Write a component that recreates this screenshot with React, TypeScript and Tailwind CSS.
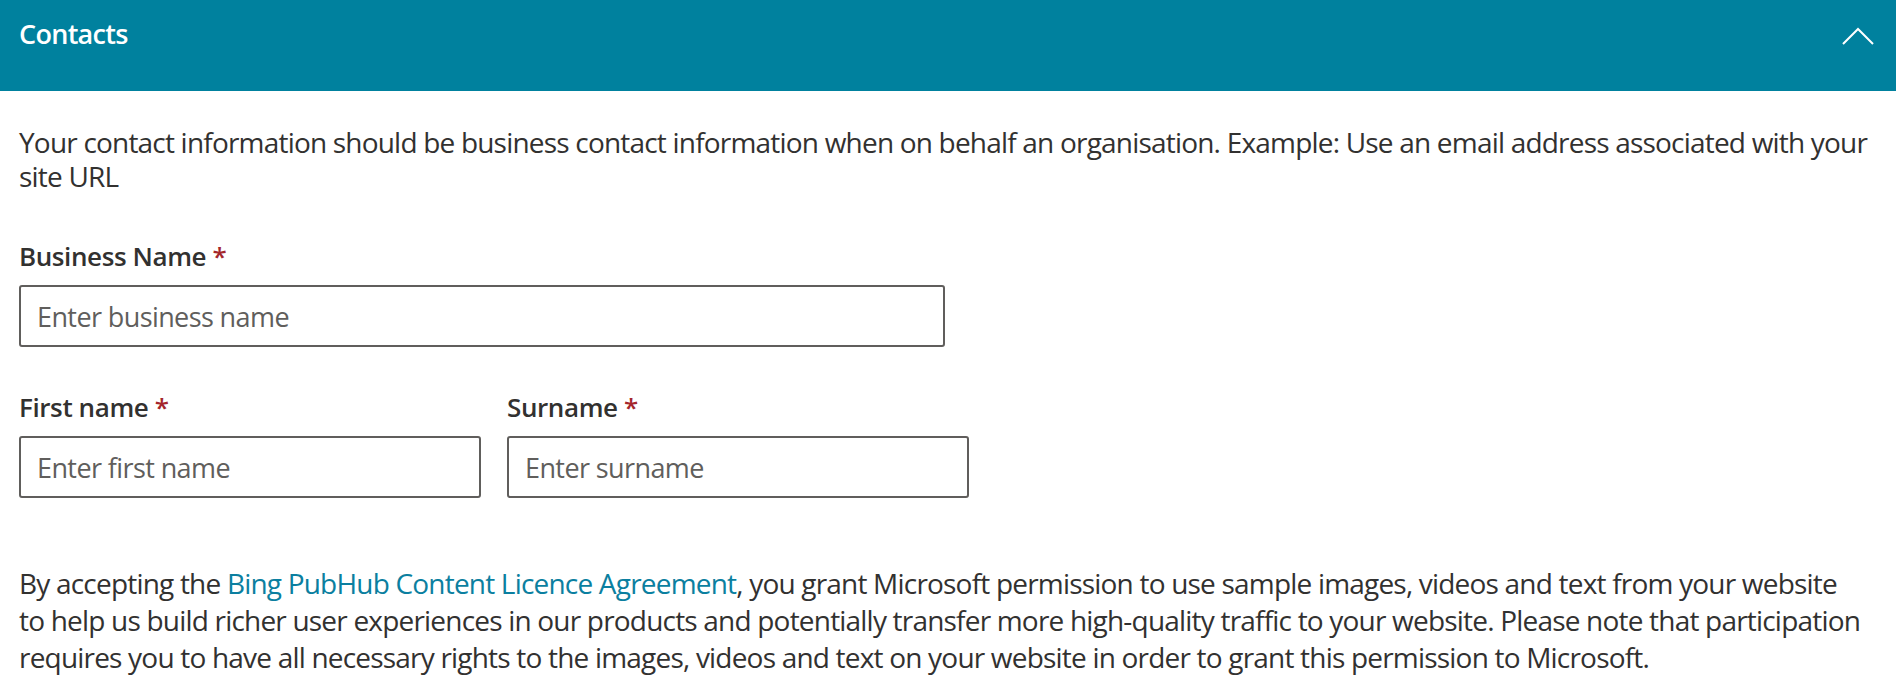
import React from "react";

/* ── Field ───────────────────────────────────────────────────────── */
function Field({
  label,
  placeholder,
  width,
}: {
  label: string;
  placeholder: string;
  width: string;
}) {
  return (
    <div className={`flex flex-col ${width}`}>
      <label className="text-[26px] leading-[34px] font-semibold tracking-[-0.4px] text-[#323130] mb-3">
        {label} <span className="text-[#a4262c]">*</span>
      </label>
      <input
        type="text"
        placeholder={placeholder}
        className="h-[62px] w-full rounded-[3px] border-2 border-[#605e5c] bg-white px-4 text-[27px] tracking-[-0.6px] text-[#323130] placeholder:text-[#605e5c] outline-none"
      />
    </div>
  );
}

/* ── Contacts section ─────────────────────────────────────────────── */
export default function App() {
  return (
    <div
      className="w-full bg-white text-[#323130]"
      style={{ fontFamily: '"Open Sans", "Noto Sans", Arial, sans-serif' }}
    >
      {/* Header */}
      <div className="flex h-[91px] items-start justify-between bg-[#00819e] pl-[19px] pr-[22px] pt-4">
        <h2 className="text-[27px] leading-[36px] font-semibold tracking-[-0.7px] text-white">
          Contacts
        </h2>
        <svg
          width="32"
          height="19"
          viewBox="0 0 32 19"
          fill="none"
          stroke="white"
          strokeWidth="2"
          className="mt-[11px]"
        >
          <path d="M1 17 L16 2 L31 17" />
        </svg>
      </div>

      <div className="pl-[19px] pr-[25px] pb-4">
        <p className="mt-[34px] text-[28px] leading-[34px] tracking-[-0.8px]">
          Your contact information should be business contact information when
          on behalf an organisation. Example: Use an email address associated
          with your site URL
        </p>

        <div className="mt-[46px]">
          <Field
            label="Business Name"
            placeholder="Enter business name"
            width="w-[926px]"
          />
        </div>

        <div className="mt-[43px] flex gap-[26px]">
          <Field
            label="First name"
            placeholder="Enter first name"
            width="w-[462px]"
          />
          <Field
            label="Surname"
            placeholder="Enter surname"
            width="w-[462px]"
          />
        </div>

        <p className="mt-[67px] text-[28px] leading-[37px] tracking-[-0.8px]">
          By accepting the{" "}
          <a href="#" className="text-[#0b7fa0]">
            Bing PubHub Content Licence Agreement
          </a>
          , you grant Microsoft permission to use sample images, videos and
          text from your website to&nbsp;help us build richer user experiences
          in our products and potentially transfer more high-quality traffic to
          your website. Please note that participation requires you to have all
          necessary rights to the images, videos and text on your website in
          order to grant this permission to Microsoft.
        </p>
      </div>
    </div>
  );
}
